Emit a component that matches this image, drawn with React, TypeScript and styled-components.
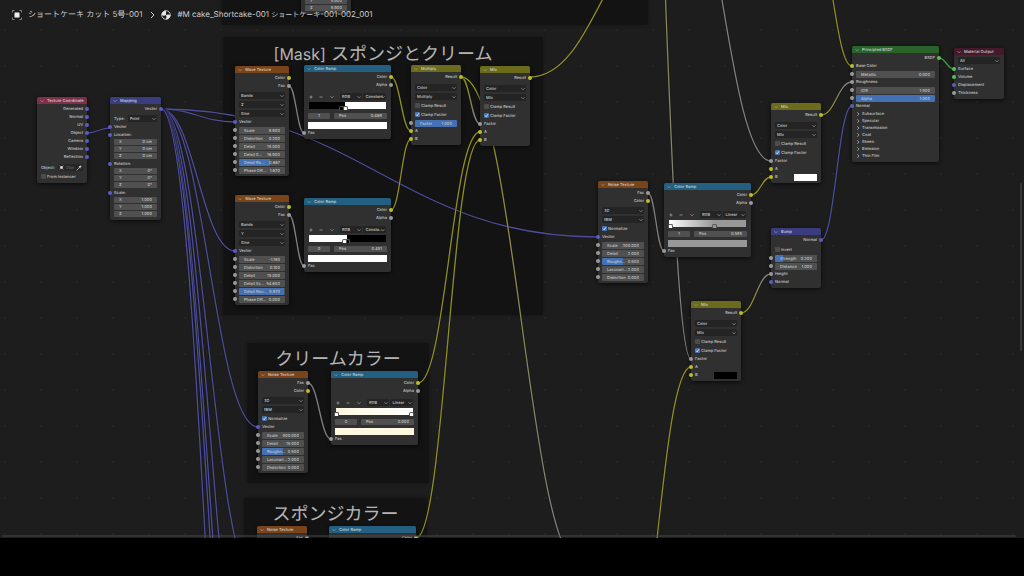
import React, { useId } from "react";
import styled, { createGlobalStyle } from "styled-components";

const GlobalStyle = createGlobalStyle`
  *, *::before, *::after { box-sizing: border-box; }
  body { margin: 0; background: #000; }
  button, input, select { font: inherit; color: inherit; margin: 0; padding: 0; border: 0; text-rendering: inherit; }
`;

const socket = {
  color: "#bdbd26",
  value: "#9a9a9a",
  vector: "#5d5dc0",
  shader: "#57c05c",
};
type Kind = keyof typeof socket;

const header = {
  input: "#7f2f48",
  vector: "#3b3b80",
  texture: "#79441a",
  converter: "#225f80",
  color: "#6b6b1b",
  shader: "#2a642a",
  output: "#45192a",
};
type Category = keyof typeof header;

/* ---------- shell ---------- */

const Page = styled.div`
  display: flex;
  flex-direction: column;
  height: 100vh;
  font-family: Inter, "Noto Sans CJK JP", sans-serif;
  text-rendering: geometricPrecision;
  color: #c4c4c4;
`;

const Canvas = styled.main`
  position: relative;
  flex: 1;
  min-height: 0;
  overflow: hidden;
  background-color: #1d1d1d;
  background-image: radial-gradient(circle, #242424 1px, transparent 1px);
  background-size: 36px 36px;
  background-position: -13px 12px;
`;

const Letterbox = styled.div`
  height: 38px;
  background: #000;
`;

const Breadcrumb = styled.nav`
  position: absolute;
  top: 8px;
  left: 12px;
  display: flex;
  align-items: center;
  height: 13px;
  font-size: 8px;
  white-space: nowrap;
  color: #cfcfcf;
`;

const Crumb = styled.a`
  display: flex;
  align-items: center;
  gap: 6px;
  color: inherit;
  text-decoration: none;
`;

const Kana = styled.span`
  font-size: 7px;
`;

const CrumbArrow = styled.svg`
  width: 5px;
  height: 8px;
  margin: 0 6px 0 8px;
`;

const VerticalScroll = styled.div`
  position: absolute;
  right: 2px;
  top: 183px;
  width: 2px;
  height: 168px;
  border-radius: 1px;
  background: #363636;
`;

const HorizontalScroll = styled.div`
  position: absolute;
  left: 2px;
  right: 8px;
  bottom: 1px;
  height: 2px;
  border-radius: 1px;
  background: rgba(80, 80, 80, 0.45);
`;

const Links = styled.svg`
  position: absolute;
  inset: 0;
  width: 100%;
  height: 100%;
  fill: none;
`;

/* ---------- frames and nodes placed on the canvas ---------- */

const Frame = styled.section<{ $x: number; $y: number; $w: number; $h: number }>`
  position: absolute;
  left: ${(p) => p.$x}px;
  top: ${(p) => p.$y}px;
  width: ${(p) => p.$w}px;
  height: ${(p) => p.$h}px;
  padding-top: 5px;
  border-radius: 2px;
  background: #131313;
  box-shadow: 0 0 3px #131313;
`;

const FrameTitle = styled.h2`
  margin: 0;
  font-size: 18px;
  font-weight: 400;
  line-height: 24px;
  text-align: center;
  white-space: nowrap;
  color: #b4b4b4;
`;

const Latin = styled.span`
  font-size: 16px;
`;

const NodeBox = styled.article<{ $x: number; $y: number; $w: number }>`
  position: absolute;
  left: ${(p) => p.$x}px;
  top: ${(p) => p.$y}px;
  width: ${(p) => p.$w}px;
  padding-bottom: 2px;
  border-radius: 2px;
  background: #303030;
  box-shadow: 0 1px 4px rgba(0, 0, 0, 0.7);
  font-size: 4px;
  font-weight: 500;
  line-height: 8px;
  white-space: nowrap;
`;

const NodeHeader = styled.header<{ $category: Category }>`
  display: flex;
  align-items: center;
  gap: 2px;
  height: 7px;
  margin-bottom: 1px;
  padding-left: 3px;
  border-radius: 2px 2px 0 0;
  background: ${(p) => header[p.$category]};
`;

const Collapse = styled.button`
  display: flex;
  align-items: center;
  width: 5px;
  height: 7px;
  background: none;
`;

const NodeTitle = styled.h3`
  margin: 0;
  font-size: 4px;
  font-weight: 500;
  line-height: 7px;
  color: #d0d0d0;
`;

const Row = styled.div<{ $align?: "start" | "end"; $tall?: boolean }>`
  position: relative;
  display: flex;
  align-items: center;
  justify-content: ${(p) => (p.$align === "end" ? "flex-end" : "flex-start")};
  height: ${(p) => (p.$tall ? 9 : 8)}px;
  padding: 0 4px;
`;

const Dot = styled.span<{ $kind: Kind; $side: "left" | "right" }>`
  position: absolute;
  top: 2px;
  ${(p) => p.$side}: -2px;
  width: 4px;
  height: 4px;
  border-radius: 50%;
  background: ${(p) => socket[p.$kind]};
`;

const Gap = styled.div<{ $size: number }>`
  height: ${(p) => p.$size}px;
`;

const SelectBox = styled.span`
  position: relative;
  display: flex;
  flex: 1;
  align-items: center;
  min-width: 0;
  height: 7px;
  border-radius: 1px;
  background: #242424;

  svg {
    position: absolute;
    right: 1px;
    pointer-events: none;
  }
`;

const NativeSelect = styled.select`
  width: 100%;
  height: 7px;
  padding-left: 2px;
  appearance: none;
  background: none;
  line-height: 7px;
`;

const FieldBox = styled.label<{ $fill: number; $height: number }>`
  display: flex;
  flex: 1;
  align-items: center;
  min-width: 0;
  height: ${(p) => p.$height}px;
  padding: 0 5px;
  border-radius: 1px;
  line-height: ${(p) => p.$height}px;
  background: linear-gradient(to right, #4470b4 ${(p) => p.$fill}%, #505050 ${(p) => p.$fill}%);
`;

const FieldInput = styled.input<{ $center?: boolean }>`
  flex: 1;
  width: 0;
  min-width: 0;
  height: 6px;
  background: none;
  text-align: ${(p) => (p.$center ? "center" : "right")};
`;

const Stack = styled.div`
  display: flex;
  flex-direction: column;
  gap: 1px;
  padding: 0 4px;
  margin-bottom: 1px;
`;

const CheckLabel = styled.label`
  display: flex;
  align-items: center;
  gap: 1px;
`;

const Tick = styled.input`
  appearance: none;
  width: 5px;
  height: 5px;
  border-radius: 1px;
  background: #4c4c4c;

  &:checked {
    background: #4772b3
      url("data:image/svg+xml,%3Csvg xmlns='http://www.w3.org/2000/svg' viewBox='0 0 10 10'%3E%3Cpath d='M2 5l2.3 2.5L8 2.5' fill='none' stroke='white' stroke-width='1.6'/%3E%3C/svg%3E");
  }
`;

const Swatch = styled.input`
  appearance: none;
  width: 23px;
  height: 7px;
  margin-left: auto;
  background: none;

  &::-webkit-color-swatch-wrapper { padding: 0; }
  &::-webkit-color-swatch { border: 0; border-radius: 0; }
`;

const ObjectField = styled.label`
  display: flex;
  align-items: center;
  gap: 3px;
  width: 100%;
`;

const ObjectBox = styled.span`
  display: flex;
  flex: 1;
  align-items: center;
  gap: 2px;
  min-width: 0;
  height: 7px;
  padding: 0 1px;
  background: #262626;
`;

const ObjectInput = styled.input`
  flex: 1;
  width: 0;
  min-width: 0;
  height: 7px;
  background: none;

  &::placeholder { color: #606060; }
`;

const PanelButton = styled.button`
  display: flex;
  align-items: center;
  gap: 2px;
  height: 7px;
  padding-left: 4px;
  background: none;
  line-height: 7px;
`;

const Panels = styled.div`
  display: flex;
  flex-direction: column;
  padding-bottom: 1px;
`;

const RampTools = styled.div`
  display: flex;
  align-items: center;
  gap: 1px;
  height: 7px;
  margin: 4px 5px 2px;
`;

const ToolButton = styled.button`
  display: flex;
  flex: 1;
  align-items: center;
  height: 7px;
  background: none;
`;

const RampSelects = styled.div`
  display: flex;
  gap: 1px;
  width: 46px;
`;

const RampBar = styled.div<{ $paint: string }>`
  position: relative;
  height: 7px;
  margin: 0 5px;
  background: ${(p) => p.$paint};
`;

const RampStop = styled.span<{ $tone: string }>`
  position: absolute;
  bottom: -1px;
  width: 5px;
  height: 4px;
  margin-left: -2px;
  border: 1px solid #555;
  border-bottom: 0;
  border-radius: 2px 2px 0 0;
  background: ${(p) => p.$tone};
`;

const RampValues = styled.div`
  display: grid;
  grid-template-columns: 22px 1fr;
  gap: 4px;
  height: 6px;
  margin: 4px 4px 3px;
`;

const RampPreview = styled.div<{ $tone: string }>`
  height: 7px;
  margin: 0 4px;
  background: ${(p) => p.$tone};
`;

/* ---------- small drawings ---------- */

const ChevronDown = () => (
  <svg width="4" height="4" viewBox="0 0 8 8" fill="none" stroke="#a8a8a8" strokeWidth="1.4">
    <path d="M1 2.5L4 5.5L7 2.5" />
  </svg>
);
const ChevronRight = () => (
  <svg width="4" height="4" viewBox="0 0 8 8" fill="none" stroke="#b5b5b5" strokeWidth="1.5">
    <path d="M2.5 0.5L6 4L2.5 7.5" />
  </svg>
);
const Glyph = ({ d }: { d: string }) => (
  <svg width="4" height="4" viewBox="0 0 8 8" fill="none" stroke="#b5b5b5" strokeWidth="1.3">
    <path d={d} />
  </svg>
);
const ObjectIcon = ({ size }: { size: number }) => (
  <svg width={size} height={size} viewBox="0 0 20 20" fill="none" stroke="#9c9c9c" strokeWidth="1.6">
    <path d="M1 5V1H5M15 1H19V5M19 15V19H15M5 19H1V15" />
    <rect x="5" y="5" width="10" height="10" rx="1" fill="#efefef" stroke="none" />
  </svg>
);
const MaterialIcon = () => (
  <svg width="10" height="10" viewBox="0 0 20 20">
    <circle cx="10" cy="10" r="8.6" fill="#1d1d1d" stroke="#e2e2e2" strokeWidth="1.6" />
    <path d="M1.4 10A8.6 8.6 0 0 1 10 1.4V10Q6 12.5 1.4 10Z" fill="#e8e8e8" />
    <path d="M10 10Q14 8 18.6 10A8.6 8.6 0 0 1 10 18.6Q12 14 10 10Z" fill="#e8e8e8" />
  </svg>
);
const Eyedropper = () => (
  <svg width="6" height="6" viewBox="0 0 12 12" fill="none" stroke="#c4c4c4">
    <path d="M1 11L7 5" strokeWidth="1.5" />
    <path d="M6 3L9 6M7.5 4.5L10.5 1.5" strokeWidth="2.4" />
  </svg>
);

/* ---------- node parts ---------- */

const Out = ({ kind, children }: { kind: Kind; children: string }) => (
  <Row $align="end">
    {children}
    <Dot $kind={kind} $side="right" />
  </Row>
);

const In = ({ kind, swatch, children }: { kind: Kind; swatch?: string; children: string }) => (
  <Row>
    <Dot $kind={kind} $side="left" />
    {children}
    {swatch && <Swatch type="color" aria-label={children} defaultValue={swatch} />}
  </Row>
);

const Select = ({ label, value }: { label: string; value: string }) => (
  <SelectBox>
    <NativeSelect aria-label={label} defaultValue={value}>
      <option>{value}</option>
    </NativeSelect>
    <ChevronDown />
  </SelectBox>
);

const SelectRow = ({ label, value }: { label: string; value: string }) => (
  <Row $tall>
    <Select label={label} value={value} />
  </Row>
);

type FieldProps = { label: string; value: string; fill?: number; height?: number };
const Field = ({ label, value, fill = 0, height = 7 }: FieldProps) => (
  <FieldBox $fill={fill} $height={height}>
    {label}
    <FieldInput defaultValue={value} />
  </FieldBox>
);

const NumberIn = (field: FieldProps) => (
  <Row>
    <Dot $kind="value" $side="left" />
    <Field {...field} />
  </Row>
);

const Check = ({ label, on }: { label: string; on?: boolean }) => (
  <Row $tall>
    <CheckLabel>
      <Tick type="checkbox" defaultChecked={on} />
      {label}
    </CheckLabel>
  </Row>
);

type Place = { x: number; y: number; w?: number };
type NodeProps = Place & { title: string; category: Category; children: React.ReactNode };
const Node = ({ x, y, w = 50, title, category, children }: NodeProps) => (
  <NodeBox $x={x} $y={y} $w={w}>
    <NodeHeader $category={category}>
      <Collapse aria-label={`Collapse ${title}`}>
        <ChevronDown />
      </Collapse>
      <NodeTitle>{title}</NodeTitle>
    </NodeHeader>
    {children}
  </NodeBox>
);

const VectorGroup = ({ label, values }: { label: string; values: string[] }) => (
  <>
    <In kind="vector">{label}</In>
    <Stack>
      {["X", "Y", "Z"].map((axis, i) => (
        <Field key={axis} label={axis} value={values[i]} height={6} />
      ))}
    </Stack>
  </>
);

type Amount = [label: string, value: string, fill?: number];

const WaveTexture = ({ direction, amounts, ...place }: Place & { direction: string; amounts: Amount[] }) => (
  <Node {...place} w={54} title="Wave Texture" category="texture">
    <Out kind="color">Color</Out>
    <Out kind="value">Fac</Out>
    <Gap $size={1} />
    <SelectRow label="Type" value="Bands" />
    <SelectRow label="Direction" value={direction} />
    <SelectRow label="Profile" value="Sine" />
    <In kind="vector">Vector</In>
    {amounts.map(([label, value, fill]) => (
      <NumberIn key={label} label={label} value={value} fill={fill} />
    ))}
  </Node>
);

const NoiseTexture = ({ scale, detail, ...place }: Place & { scale: string; detail: string }) => (
  <Node {...place} title="Noise Texture" category="texture">
    <Out kind="value">Fac</Out>
    <Out kind="color">Color</Out>
    <Gap $size={1} />
    <SelectRow label="Dimensions" value="3D" />
    <SelectRow label="Noise type" value="fBM" />
    <Check label="Normalize" on />
    <In kind="vector">Vector</In>
    <NumberIn label="Scale" value={scale} />
    <NumberIn label="Detail" value={detail} />
    <NumberIn label="Roughn…" value="0.500" fill={50} />
    <NumberIn label="Lacunari…" value="2.000" />
    <NumberIn label="Distortion" value="0.000" />
  </Node>
);

type RampProps = Place & {
  mode: string;
  paint: string;
  stops: { at: number; tone: string }[];
  index: string;
  pos: string;
  tone: string;
};
const ColorRamp = ({ mode, paint, stops, index, pos, tone, ...place }: RampProps) => (
  <Node {...place} w={87} title="Color Ramp" category="converter">
    <Out kind="color">Color</Out>
    <Out kind="value">Alpha</Out>
    <RampTools>
      <ToolButton aria-label="Add stop"><Glyph d="M4 1V7M1 4H7" /></ToolButton>
      <ToolButton aria-label="Remove stop"><Glyph d="M1 4H7" /></ToolButton>
      <ToolButton aria-label="Ramp tools"><ChevronDown /></ToolButton>
      <RampSelects>
        <Select label="Color mode" value="RGB" />
        <Select label="Interpolation" value={mode} />
      </RampSelects>
    </RampTools>
    <RampBar $paint={paint}>
      {stops.map((s) => (
        <RampStop key={s.at} $tone={s.tone} style={{ left: `${s.at}%` }} />
      ))}
    </RampBar>
    <RampValues>
      <FieldBox $fill={0} $height={6}>
        <FieldInput aria-label="Active stop" $center defaultValue={index} />
      </FieldBox>
      <Field label="Pos" value={pos} height={6} />
    </RampValues>
    <RampPreview $tone={tone} />
    <In kind="value">Fac</In>
  </Node>
);

type MixProps = Place & { title?: string; blend?: string; factor?: string; swatch?: string };
const MixNode = ({ title = "Mix", blend = "Mix", factor, swatch, ...place }: MixProps) => (
  <Node {...place} title={title} category="color">
    <Out kind="color">Result</Out>
    <Gap $size={2} />
    <SelectRow label="Data type" value="Color" />
    <SelectRow label="Blend mode" value={blend} />
    <Check label="Clamp Result" />
    <Check label="Clamp Factor" on />
    {factor ? <NumberIn label="Factor" value={factor} fill={100} /> : <In kind="value">Factor</In>}
    <In kind="color">A</In>
    <In kind="color" swatch={swatch}>B</In>
  </Node>
);

/* ---------- links ---------- */

type Point = [number, number];
type LinkSpec = { from: Point; to: Point; a: Kind; b?: Kind };

const wire = { color: "#8f8f24", value: "#808080", vector: "#4d4d9b", shader: "#3f9c46" };

const links: LinkSpec[] = [
  { from: [87, 133], to: [110, 128], a: "vector" },
  { from: [161, 109], to: [235, 122], a: "vector" },
  { from: [161, 109], to: [598, 237], a: "vector" },
  { from: [161, 109], to: [235, 251], a: "vector" },
  { from: [161, 109], to: [258, 427], a: "vector" },
  { from: [161, 109], to: [256, 582], a: "vector" },
  { from: [161, 109], to: [262, 790], a: "vector" },
  { from: [161, 109], to: [260, 900], a: "vector" },
  { from: [161, 109], to: [260, 980], a: "vector" },
  { from: [161, 109], to: [258, 1130], a: "vector" },
  { from: [289, 86], to: [304, 133], a: "value" },
  { from: [289, 215], to: [304, 266], a: "value" },
  { from: [308, 383], to: [331, 439], a: "value" },
  { from: [648, 193], to: [664, 251], a: "value" },
  { from: [391, 77], to: [411, 131], a: "color" },
  { from: [391, 210], to: [411, 139], a: "color" },
  { from: [461, 77], to: [480, 124], a: "color", b: "value" },
  { from: [461, 77], to: [582, 567], a: "color", b: "value" },
  { from: [418, 383], to: [480, 132], a: "color" },
  { from: [416, 538], to: [480, 140], a: "color" },
  { from: [530, 77], to: [676, -80], a: "color" },
  { from: [640, -360], to: [691, 359], a: "color", b: "value" },
  { from: [673, -161], to: [771, 161], a: "value" },
  { from: [815, -60], to: [852, 66], a: "color" },
  { from: [751, 195], to: [771, 177], a: "color" },
  { from: [821, 115], to: [852, 82], a: "color", b: "value" },
  { from: [741, 313], to: [771, 274], a: "color", b: "value" },
  { from: [821, 240], to: [852, 106], a: "vector" },
  { from: [939, 58], to: [954, 69], a: "shader" },
  { from: [622, 720], to: [691, 367], a: "color" },
];

const Link = ({ from, to, a, b }: LinkSpec) => {
  const id = useId();
  const reach = (to[0] - from[0]) * 0.45;
  const d = `M${from[0]} ${from[1]}C${from[0] + reach} ${from[1]} ${to[0] - reach} ${to[1]} ${to[0]} ${to[1]}`;
  return (
    <>
      {b && (
        <linearGradient id={id} gradientUnits="userSpaceOnUse" x1={from[0]} y1={from[1]} x2={to[0]} y2={to[1]}>
          <stop offset="0.1" stopColor={wire[a]} />
          <stop offset="0.9" stopColor={wire[b]} />
        </linearGradient>
      )}
      <path d={d} stroke="#111" strokeOpacity="0.5" strokeWidth="2.4" />
      <path d={d} stroke={b ? `url(#${id})` : wire[a]} strokeWidth="1.3" />
    </>
  );
};

const panels = ["Subsurface", "Specular", "Transmission", "Coat", "Sheen", "Emission", "Thin Film"];

export default function App() {
  return (
    <Page>
      <GlobalStyle />
      <Canvas>
        <Frame $x={222} $y={-60} $w={426} $h={85} />
        <Frame $x={223} $y={37} $w={320} $h={278}>
          <FrameTitle><Latin>[Mask]</Latin> スポンジとクリーム</FrameTitle>
        </Frame>
        <Frame $x={247} $y={343} $w={182} $h={140}>
          <FrameTitle>クリームカラー</FrameTitle>
        </Frame>
        <Frame $x={244} $y={498} $w={183} $h={140}>
          <FrameTitle>スポンジカラー</FrameTitle>
        </Frame>

        <Links aria-hidden="true">
          {links.map((l, i) => (
            <Link key={i} {...l} />
          ))}
        </Links>

        <NodeBox $x={301} $y={-3} $w={50}>
          <Stack>
            <Field label="Y" value="5.900" />
            <Field label="Z" value="5.900" height={6} />
          </Stack>
        </NodeBox>

        <Node x={37} y={97} title="Texture Coordinate" category="input">
          {["Generated", "Normal", "UV", "Object", "Camera", "Window", "Reflection"].map((name) => (
            <Out key={name} kind="vector">{name}</Out>
          ))}
          <Gap $size={2} />
          <Row $tall>
            <ObjectField>
              Object:
              <ObjectBox>
                <ObjectIcon size={5} />
                <ObjectInput placeholder="Object" />
                <Eyedropper />
              </ObjectBox>
            </ObjectField>
          </Row>
          <Check label="From Instancer" />
        </Node>

        <Node x={110} y={97} w={51} title="Mapping" category="vector">
          <Out kind="vector">Vector</Out>
          <Gap $size={1} />
          <Row $tall>
            <ObjectField as="div">
              Type:
              <Select label="Type" value="Point" />
            </ObjectField>
          </Row>
          <In kind="vector">Vector</In>
          <VectorGroup label="Location:" values={["0 cm", "0 cm", "0 cm"]} />
          <VectorGroup label="Rotation:" values={["0°", "0°", "0°"]} />
          <VectorGroup label="Scale:" values={["1.000", "1.000", "1.000"]} />
        </Node>

        <WaveTexture
          x={235}
          y={66}
          direction="Z"
          amounts={[
            ["Scale", "8.800"],
            ["Distortion", "0.200"],
            ["Detail", "15.000"],
            ["Detail S…", "16.900"],
            ["Detail Ro…", "0.667", 67],
            ["Phase Off…", "1.620"],
          ]}
        />
        <ColorRamp
          x={304}
          y={65}
          mode="Constant"
          paint="linear-gradient(to right, #000 47%, #fff 47%)"
          stops={[{ at: 42, tone: "#000" }, { at: 47, tone: "#fff" }]}
          index="1"
          pos="0.469"
          tone="#fff"
        />
        <WaveTexture
          x={235}
          y={195}
          direction="Y"
          amounts={[
            ["Scale", "-1.180"],
            ["Distortion", "0.100"],
            ["Detail", "15.000"],
            ["Detail Sc…", "54.600"],
            ["Detail Rou…", "0.970", 97],
            ["Phase Off…", "0.000"],
          ]}
        />
        <ColorRamp
          x={304}
          y={198}
          mode="Consta…"
          paint="linear-gradient(to right, #fff 49%, #000 49%)"
          stops={[{ at: 49, tone: "#000" }, { at: 45, tone: "#fff" }]}
          index="0"
          pos="0.451"
          tone="#fff"
        />
        <MixNode x={411} y={65} title="Multiply" blend="Multiply" factor="1.000" />
        <MixNode x={480} y={66} />

        <NoiseTexture x={258} y={371} scale="500.000" detail="15.000" />
        <ColorRamp
          x={331}
          y={371}
          mode="Linear"
          paint="linear-gradient(to right, #fff7e0, #fff)"
          stops={[{ at: 0, tone: "#fff" }, { at: 98, tone: "#fff" }]}
          index="0"
          pos="0.000"
          tone="#fff7e0"
        />
        <Node x={257} y={526} title="Noise Texture" category="texture">
          <Out kind="value">Fac</Out>
        </Node>
        <Node x={329} y={526} w={87} title="Color Ramp" category="converter">
          <Out kind="color">Color</Out>
        </Node>

        <NoiseTexture x={598} y={181} scale="300.000" detail="2.000" />
        <ColorRamp
          x={664}
          y={183}
          mode="Linear"
          paint="linear-gradient(to right, #fff, #989898 58%)"
          stops={[{ at: 1, tone: "#fff" }, { at: 58, tone: "#989898" }]}
          index="1"
          pos="0.585"
          tone="#989898"
        />
        <MixNode x={771} y={103} swatch="#ffffff" />
        <MixNode x={691} y={301} swatch="#000000" />

        <Node x={771} y={228} title="Bump" category="vector">
          <Out kind="vector">Normal</Out>
          <Gap $size={1} />
          <Check label="Invert" />
          <NumberIn label="Strength" value="0.200" fill={20} />
          <NumberIn label="Distance" value="1.000" />
          <In kind="value">Height</In>
          <In kind="vector">Normal</In>
        </Node>

        <Node x={852} y={46} w={87} title="Principled BSDF" category="shader">
          <Out kind="shader">BSDF</Out>
          <In kind="color">Base Color</In>
          <NumberIn label="Metallic" value="0.000" />
          <In kind="value">Roughness</In>
          <NumberIn label="IOR" value="1.500" />
          <NumberIn label="Alpha" value="1.000" fill={100} />
          <In kind="vector">Normal</In>
          <Panels>
            {panels.map((name) => (
              <PanelButton key={name}>
                <ChevronRight />
                {name}
              </PanelButton>
            ))}
          </Panels>
        </Node>

        <Node x={954} y={48} title="Material Output" category="output">
          <SelectRow label="Target" value="All" />
          <In kind="shader">Surface</In>
          <In kind="shader">Volume</In>
          <In kind="vector">Displacement</In>
          <In kind="value">Thickness</In>
        </Node>

        <Breadcrumb aria-label="Node tree path">
          <Crumb href="#object">
            <ObjectIcon size={10} />
            <span>ショートケーキ カット 5号-001</span>
          </Crumb>
          <CrumbArrow viewBox="0 0 5 8" fill="none" stroke="#cfcfcf">
            <path d="M1 1L4 4L1 7" />
          </CrumbArrow>
          <Crumb href="#material">
            <MaterialIcon />
            <span>#M cake_Shortcake-001 <Kana>ショートケーキ</Kana>-001-002_001</span>
          </Crumb>
        </Breadcrumb>
        <VerticalScroll />
        <HorizontalScroll />
      </Canvas>
      <Letterbox />
    </Page>
  );
}
